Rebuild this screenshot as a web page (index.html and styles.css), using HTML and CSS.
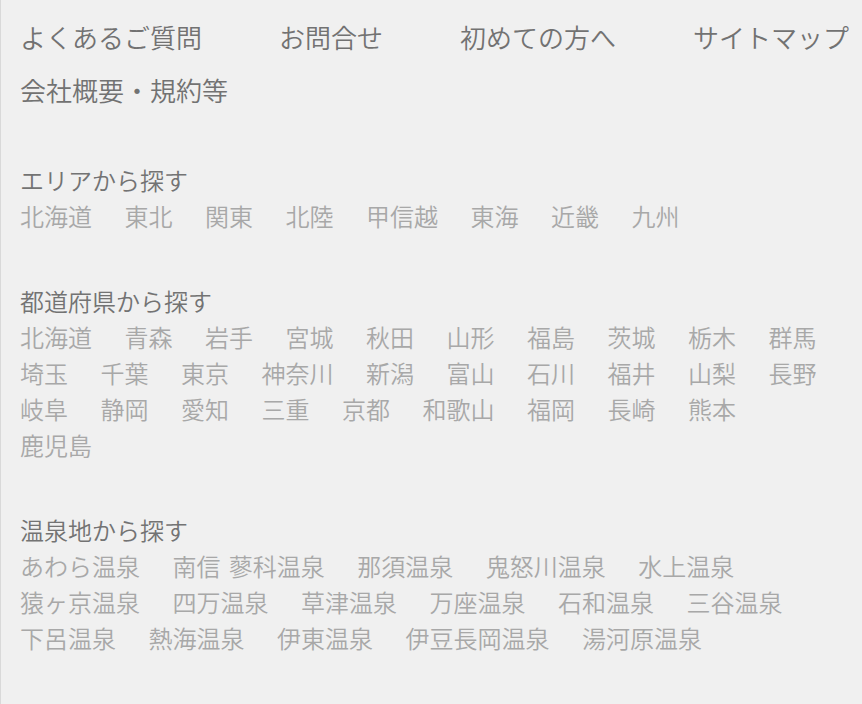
FILE: index.html
```html
<!DOCTYPE html>
<html lang="ja">
<head>
	<meta charset="utf-8">
	<title>サイトマップ</title>
	<link rel="stylesheet" href="styles.css">
</head>
<body>
<div class="page">
	<ul class="nav">
		<li><a href="#">よくあるご質問</a></li>
		<li><a href="#">お問合せ</a></li>
		<li><a href="#">初めての方へ</a></li>
		<li><a href="#">サイトマップ</a></li>
		<li><a href="#">会社概要・規約等</a></li>
	</ul>

	<div class="section">
		<div class="heading">エリアから探す</div>
		<ul class="links">
			<li><a href="#">北海道</a></li>
			<li><a href="#">東北</a></li>
			<li><a href="#">関東</a></li>
			<li><a href="#">北陸</a></li>
			<li><a href="#">甲信越</a></li>
			<li><a href="#">東海</a></li>
			<li><a href="#">近畿</a></li>
			<li><a href="#">九州</a></li>
		</ul>
	</div>

	<div class="section">
		<div class="heading">都道府県から探す</div>
		<ul class="links">
			<li><a href="#">北海道</a></li>
			<li><a href="#">青森</a></li>
			<li><a href="#">岩手</a></li>
			<li><a href="#">宮城</a></li>
			<li><a href="#">秋田</a></li>
			<li><a href="#">山形</a></li>
			<li><a href="#">福島</a></li>
			<li><a href="#">茨城</a></li>
			<li><a href="#">栃木</a></li>
			<li><a href="#">群馬</a></li>
			<li><a href="#">埼玉</a></li>
			<li><a href="#">千葉</a></li>
			<li><a href="#">東京</a></li>
			<li><a href="#">神奈川</a></li>
			<li><a href="#">新潟</a></li>
			<li><a href="#">富山</a></li>
			<li><a href="#">石川</a></li>
			<li><a href="#">福井</a></li>
			<li><a href="#">山梨</a></li>
			<li><a href="#">長野</a></li>
			<li><a href="#">岐阜</a></li>
			<li><a href="#">静岡</a></li>
			<li><a href="#">愛知</a></li>
			<li><a href="#">三重</a></li>
			<li><a href="#">京都</a></li>
			<li><a href="#">和歌山</a></li>
			<li><a href="#">福岡</a></li>
			<li><a href="#">長崎</a></li>
			<li><a href="#">熊本</a></li>
			<li><a href="#">鹿児島</a></li>
		</ul>
	</div>

	<div class="section">
		<div class="heading">温泉地から探す</div>
		<ul class="links">
			<li><a href="#">あわら温泉</a></li>
			<li><a href="#">南信 蓼科温泉</a></li>
			<li><a href="#">那須温泉</a></li>
			<li><a href="#">鬼怒川温泉</a></li>
			<li><a href="#">水上温泉</a></li>
			<li><a href="#">猿ヶ京温泉</a></li>
			<li><a href="#">四万温泉</a></li>
			<li><a href="#">草津温泉</a></li>
			<li><a href="#">万座温泉</a></li>
			<li><a href="#">石和温泉</a></li>
			<li><a href="#">三谷温泉</a></li>
			<li><a href="#">下呂温泉</a></li>
			<li><a href="#">熱海温泉</a></li>
			<li><a href="#">伊東温泉</a></li>
			<li><a href="#">伊豆長岡温泉</a></li>
			<li><a href="#">湯河原温泉</a></li>
		</ul>
	</div>
</div>
</body>
</html>
```

FILE: styles.css
```css
html, body{
	margin: 0;
	padding: 0;
	background-color: #f0f0f0;
}
body{
	font-family: "Noto Sans CJK JP", "Noto Sans", sans-serif;
	font-weight: 350;
}
.page{
	min-height: 704px;
	box-sizing: border-box;
	border-left: 1px solid #d9d9d9;
	padding: 9.5px 0 0 19px;
}
ul{
	list-style-type: none;
	margin: 0;
	padding: 0;
}
a{
	text-decoration: none;
}

/* 上部のリンク */
.nav{
	display: flex;
	flex-wrap: wrap;
	column-gap: 77px;
	font-size: 26px;
	line-height: 53px;
	margin-bottom: 45px;
}
.nav a{
	color: #727272;
}

/* 探すブロック */
.section{
	margin-bottom: 48px;
}
.heading{
	font-size: 24px;
	line-height: 37px;
	color: #737373;
}
.links{
	display: flex;
	flex-wrap: wrap;
	font-size: 24px;
	line-height: 36px;
	word-spacing: 3px;
}
.links li{
	margin-right: 32.5px;
	white-space: nowrap;
}
.links a{
	color: #a8a8a8;
}
```
